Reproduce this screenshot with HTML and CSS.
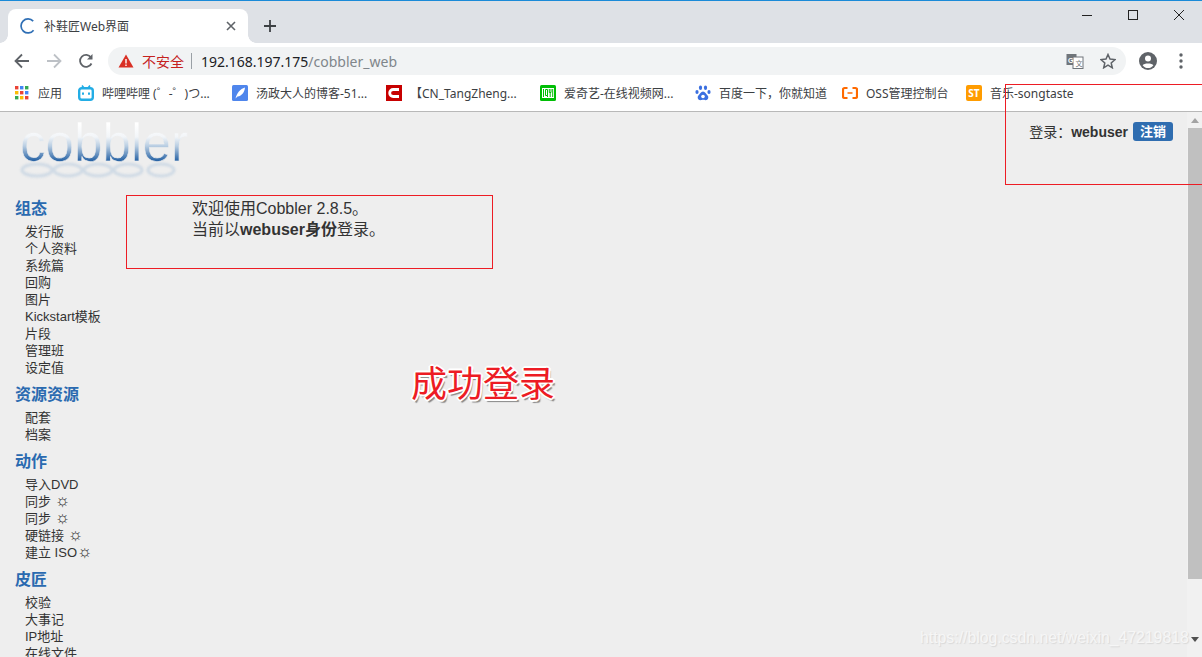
FILE: index.html
```html
<!DOCTYPE html>
<html lang="zh-CN">
<head>
    <meta charset="UTF-8">
    <meta name="viewport" content="width=device-width, initial-scale=1.0">
    <title>补鞋匠Web界面</title>
    <link rel="stylesheet" href="styles.css">
</head>
<body>
    <div class="window">
        <div class="tabstrip">
            <div class="tab">
                <svg class="tab-icon" width="16" height="16" viewBox="0 0 16 16"><path d="M13.2 3.2A7 7 0 1 0 13.6 12.2" fill="none" stroke="#2f6fb5" stroke-width="1.7"/></svg>
                <span class="tab-title">补鞋匠Web界面</span>
                <svg class="tab-close" width="10" height="10" viewBox="0 0 10 10"><path d="M1 1L9 9M9 1L1 9" stroke="#5f6368" stroke-width="1.6"/></svg>
            </div>
            <svg class="new-tab" width="14" height="14" viewBox="0 0 14 14"><path d="M7 1V13M1 7H13" stroke="#3c4043" stroke-width="1.8"/></svg>
            <div class="win-controls">
                <svg width="12" height="12" viewBox="0 0 12 12"><path d="M1 6.5H11" stroke="#222" stroke-width="1"/></svg>
                <svg width="12" height="12" viewBox="0 0 12 12"><rect x="1.5" y="1.5" width="9" height="9" fill="none" stroke="#222" stroke-width="1"/></svg>
                <svg width="12" height="12" viewBox="0 0 12 12"><path d="M1 1L11 11M11 1L1 11" stroke="#222" stroke-width="1"/></svg>
            </div>
        </div>

        <div class="toolbar">
            <svg class="nav-btn" width="16" height="16" viewBox="0 0 16 16"><path d="M15 8H2M8 1.5L1.5 8L8 14.5" fill="none" stroke="#5f6368" stroke-width="1.8"/></svg>
            <svg class="nav-btn" width="16" height="16" viewBox="0 0 16 16"><path d="M1 8H14M8 1.5L14.5 8L8 14.5" fill="none" stroke="#bdc1c6" stroke-width="1.8"/></svg>
            <svg class="nav-btn" width="16" height="16" viewBox="0 0 16 16"><path d="M13.5 10.5A6 6 0 1 1 13 4.5" fill="none" stroke="#5f6368" stroke-width="1.8"/><path d="M14.5 1V6.5H9" fill="#5f6368"/></svg>
            <div class="omnibox">
                <svg width="16" height="14" viewBox="0 0 16 14"><path d="M8 0.5L15.5 13.5H0.5Z" fill="#d93025"/><path d="M8 5V9.5M8 10.5V12" stroke="#fff" stroke-width="1.4"/></svg>
                <span class="insecure">不安全</span>
                <span class="omni-sep"></span>
                <span class="url">192.168.197.175<span class="url-path">/cobbler_web</span></span>
                <span class="omni-right">
                    <svg width="18" height="16" viewBox="0 0 18 16"><rect x="0.5" y="1" width="10" height="11" fill="#70757a"/><rect x="7" y="4" width="10" height="11.5" fill="#fff" stroke="#70757a"/><text x="2" y="10" class="trans-g">G</text><text x="9.5" y="13" class="trans-a">文</text></svg>
                    <svg width="16" height="16" viewBox="0 0 16 16"><path d="M8 1.5L10 6.1L15 6.6L11.2 9.9L12.3 14.8L8 12.2L3.7 14.8L4.8 9.9L1 6.6L6 6.1Z" fill="none" stroke="#5f6368" stroke-width="1.5"/></svg>
                </span>
            </div>
            <svg class="avatar" width="18" height="18" viewBox="0 0 18 18"><circle cx="9" cy="9" r="9" fill="#5f6368"/><circle cx="9" cy="6.6" r="3" fill="#fff"/><path d="M3.6 13.2C5 10.9 13 10.9 14.4 13.2C13 15.2 11 16 9 16C7 16 5 15.2 3.6 13.2Z" fill="#fff"/></svg>
            <svg class="menu-dots" width="4" height="16" viewBox="0 0 4 16"><circle cx="2" cy="2" r="1.7" fill="#5f6368"/><circle cx="2" cy="8" r="1.7" fill="#5f6368"/><circle cx="2" cy="14" r="1.7" fill="#5f6368"/></svg>
        </div>

        <div class="bookmarks">
            <div class="bm bm-apps">
                <svg width="14" height="14" viewBox="0 0 14 14">
                    <rect x="0" y="0" width="3.4" height="3.4" fill="#ea4335"/><rect x="5" y="0" width="3.4" height="3.4" fill="#4285f4"/><rect x="10" y="0" width="3.4" height="3.4" fill="#34a853"/>
                    <rect x="0" y="5" width="3.4" height="3.4" fill="#fbbc05"/><rect x="5" y="5" width="3.4" height="3.4" fill="#ea4335"/><rect x="10" y="5" width="3.4" height="3.4" fill="#4285f4"/>
                    <rect x="0" y="10" width="3.4" height="3.4" fill="#34a853"/><rect x="5" y="10" width="3.4" height="3.4" fill="#fbbc05"/><rect x="10" y="10" width="3.4" height="3.4" fill="#ea4335"/>
                </svg>
                <span>应用</span>
            </div>
            <div class="bm bm-bili">
                <svg width="16" height="16" viewBox="0 0 16 16"><path d="M4 0.5L6 3M12 0.5L10 3" stroke="#23ade5" stroke-width="1.6"/><rect x="1.2" y="3.2" width="13.6" height="11.6" rx="2.5" fill="none" stroke="#23ade5" stroke-width="2.4"/><path d="M5 7.5V9.8M11 7.5V9.8" stroke="#23ade5" stroke-width="2"/></svg>
                <span>哔哩哔哩 (゜-゜)つ...</span>
            </div>
            <div class="bm bm-blog">
                <svg width="16" height="16" viewBox="0 0 16 16"><rect width="16" height="16" rx="1.5" fill="#4f86ec"/><path d="M3.5 13.5C5 8 8 4 13 2.5C12.5 7 10 11 5.5 11.5" fill="#fff"/></svg>
                <span>汤政大人的博客-51...</span>
            </div>
            <div class="bm bm-tang">
                <svg width="16" height="16" viewBox="0 0 16 16"><rect width="16" height="16" fill="#c70000"/><path d="M13 4.5H7.2A3.5 3.5 0 0 0 7.2 11.5H13" fill="none" stroke="#fff" stroke-width="2.8"/></svg>
                <span>【CN_TangZheng...</span>
            </div>
            <div class="bm bm-iqiyi">
                <svg width="16" height="16" viewBox="0 0 16 16"><rect width="16" height="16" rx="1.5" fill="#00be06"/><rect x="2" y="3" width="12" height="10" fill="#fff"/><path d="M3.5 4V12M5.5 4.5H7.5V10.5H5.5ZM7.5 10.5V12M9.3 4V7.5H11V4M10.2 7.5V12M12.7 4V12" fill="none" stroke="#00be06" stroke-width="1"/></svg>
                <span>爱奇艺-在线视频网...</span>
            </div>
            <div class="bm bm-baidu">
                <svg width="16" height="16" viewBox="0 0 16 16"><g fill="#3a6fe0"><ellipse cx="5.5" cy="2.8" rx="1.6" ry="2.2"/><ellipse cx="10.5" cy="2.8" rx="1.6" ry="2.2"/><ellipse cx="2" cy="7" rx="1.6" ry="2"/><ellipse cx="14" cy="7" rx="1.6" ry="2"/><path d="M8 6.5C5.8 6.5 5 9 3.4 10.5C2 12 2.8 15.2 5.4 15.2C6.5 15.2 7 14.8 8 14.8C9 14.8 9.5 15.2 10.6 15.2C13.2 15.2 14 12 12.6 10.5C11 9 10.2 6.5 8 6.5Z"/></g><circle cx="8" cy="11.5" r="1.8" fill="#fff"/></svg>
                <span>百度一下<span class="punct">，</span>你就知道</span>
            </div>
            <div class="bm bm-oss">
                <svg width="16" height="16" viewBox="0 0 16 16"><path d="M5.5 3H2.5A1.5 1.5 0 0 0 1 4.5V11.5A1.5 1.5 0 0 0 2.5 13H5.5M10.5 3H13.5A1.5 1.5 0 0 1 15 4.5V11.5A1.5 1.5 0 0 1 13.5 13H10.5" fill="none" stroke="#ff6a00" stroke-width="2.2"/><path d="M5.5 8H10.5" stroke="#ff6a00" stroke-width="1.5"/></svg>
                <span>OSS管理控制台</span>
            </div>
            <div class="bm">
                <span class="st-icon">ST</span>
                <span>音乐-songtaste</span>
            </div>
        </div>

        <div class="page">
            <div class="page-main">
                <div class="page-head">
                    <svg class="logo" width="174" height="78" viewBox="0 -8 174 78" role="img">
                        <defs>
                            <linearGradient id="logo-grad" gradientUnits="userSpaceOnUse" x1="0" y1="4" x2="0" y2="41">
                                <stop offset="0" stop-color="#ffffff"/>
                                <stop offset="0.35" stop-color="#f2f5f8"/>
                                <stop offset="0.6" stop-color="#b8cde2"/>
                                <stop offset="1" stop-color="#2561a4"/>
                            </linearGradient>
                        </defs>
                        <g class="logo-reflect">
                            <ellipse cx="19" cy="50" rx="15" ry="6"/>
                            <ellipse cx="50" cy="50" rx="14" ry="6"/>
                            <ellipse cx="80" cy="50" rx="14" ry="6"/>
                            <ellipse cx="110" cy="50" rx="14" ry="6"/>
                            <ellipse cx="143" cy="50" rx="13" ry="6"/>
                        </g>
                        <text class="logo-text" x="2" y="41" textLength="168" lengthAdjust="spacingAndGlyphs" fill="url(#logo-grad)">cobbler</text>
                    </svg>
                    <div class="login">
                        <span>登录<span class="punct">：</span><b>webuser</b></span>
                        <a class="logout">注销</a>
                    </div>
                </div>
                <div class="page-body">
                    <div class="sidebar">
                        <h4>组态</h4>
                        <ul>
                            <li>发行版</li>
                            <li>个人资料</li>
                            <li>系统篇</li>
                            <li>回购</li>
                            <li>图片</li>
                            <li>Kickstart模板</li>
                            <li>片段</li>
                            <li>管理班</li>
                            <li>设定值</li>
                        </ul>
                        <h4>资源资源</h4>
                        <ul>
                            <li>配套</li>
                            <li>档案</li>
                        </ul>
                        <h4>动作</h4>
                        <ul>
                            <li>导入DVD</li>
                            <li>同步 <span class="sun">☼</span></li>
                            <li>同步 <span class="sun">☼</span></li>
                            <li>硬链接 <span class="sun">☼</span></li>
                            <li>建立 ISO<span class="sun">☼</span></li>
                        </ul>
                        <h4>皮匠</h4>
                        <ul>
                            <li>校验</li>
                            <li>大事记</li>
                            <li>IP地址</li>
                            <li>在线文件</li>
                        </ul>
                    </div>
                    <div class="content">
                        <p>欢迎使用Cobbler 2.8.5。</p>
                        <p>当前以<b>webuser身份</b>登录。</p>
                    </div>
                </div>
            </div>
            <div class="scrollbar">
                <span class="arrow-up"></span>
                <div class="thumb"></div>
                <span class="arrow-down"></span>
            </div>
        </div>

        <!-- annotations drawn on top of the screenshot -->
        <div class="mark mark-login"></div>
        <div class="mark mark-welcome"></div>
        <div class="note">成功登录</div>
        <div class="watermark">https://blog.csdn.net/weixin_47219818</div>
    </div>
</body>
</html>
```

FILE: styles.css
```css
html, body {
    margin: 0;
    padding: 0;
    height: 657px;
    overflow: hidden;
}
body {
    font-family: "Liberation Sans", "Noto Sans CJK SC", sans-serif;
    color: #333;
    background: #eee;
}
.window {
    position: relative;
    display: flex;
    flex-direction: column;
    height: 657px;
    overflow: hidden;
}
.punct {
    font-family: "Noto Sans CJK TC", sans-serif;
}

/* tab strip */
.tabstrip {
    display: flex;
    align-items: flex-end;
    box-sizing: border-box;
    height: 43px;
    padding-left: 8px;
    background: #dee1e6;
    border-top: 1px solid #1a8ad8;
}
.tab {
    position: relative;
    display: flex;
    align-items: center;
    box-sizing: border-box;
    width: 240px;
    height: 34px;
    padding: 0 12px;
    background: #fff;
    border-radius: 8px 8px 0 0;
}
.tab::before, .tab::after {
    content: "";
    position: absolute;
    bottom: 0;
    width: 8px;
    height: 8px;
}
.tab::before {
    left: -8px;
    background: radial-gradient(circle at 0 0, #dee1e6 7.5px, #fff 8px);
}
.tab::after {
    right: -8px;
    background: radial-gradient(circle at 100% 0, #dee1e6 7.5px, #fff 8px);
}
.tab-title {
    flex: 1;
    margin-left: 8px;
    font-family: "Noto Sans", "Noto Sans CJK SC", sans-serif;
    font-size: 12px;
    color: #3c4043;
}
.new-tab {
    margin: 0 0 10px 15px;
}
.win-controls {
    display: flex;
    gap: 34px;
    margin: 8px 17px 22px auto;
    align-self: flex-start;
}

/* toolbar */
.toolbar {
    display: flex;
    align-items: center;
    height: 32px;
    padding-top: 4px;
    box-sizing: border-box;
    background: #fff;
}
.nav-btn {
    margin-left: 16px;
    flex: none;
}
.nav-btn:first-child {
    margin-left: 14px;
}
.omnibox {
    display: flex;
    align-items: center;
    flex: none;
    box-sizing: border-box;
    width: 1018px;
    height: 28px;
    margin-left: 14px;
    padding: 0 10px;
    background: #f1f3f4;
    border-radius: 14px;
}
.insecure {
    margin-left: 8px;
    font-size: 14px;
    color: #c5221f;
}
.omni-sep {
    width: 1px;
    height: 16px;
    margin: 0 9px 0 7px;
    background: #9aa0a6;
}
.url {
    font-family: "Noto Sans", sans-serif;
    font-size: 14px;
    color: #202124;
}
.url-path {
    color: #80868b;
}
.omni-right {
    display: flex;
    align-items: center;
    gap: 16px;
    margin-left: auto;
}
.trans-g {
    font-size: 7px;
    font-weight: bold;
    fill: #fff;
}
.trans-a {
    font-size: 7px;
    fill: #70757a;
}
.avatar {
    flex: none;
    margin-left: 13px;
}
.menu-dots {
    flex: none;
    margin-left: 22px;
}

/* bookmarks bar */
.bookmarks {
    display: flex;
    align-items: center;
    box-sizing: border-box;
    height: 37px;
    padding: 0 0 1px 15px;
    background: #fff;
    border-bottom: 1px solid #b8b8b8;
    font-family: "Noto Sans", "Noto Sans CJK SC", sans-serif;
    font-size: 12px;
    color: #3c4043;
    white-space: nowrap;
}
.bm {
    display: flex;
    align-items: center;
    gap: 8px;
    flex: none;
}
.bm svg {
    flex: none;
}
.bm-apps { width: 63px; gap: 9px; }
.bm-bili { width: 154px; }
.bm-blog { width: 154px; }
.bm-tang { width: 154px; }
.bm-iqiyi { width: 155px; }
.bm-baidu { width: 147px; }
.bm-oss { width: 124px; }
.st-icon {
    width: 16px;
    height: 16px;
    border-radius: 2px;
    background: #ff9c00;
    color: #fff;
    font-size: 10px;
    font-weight: bold;
    line-height: 16px;
    text-align: center;
}

/* page */
.page {
    flex: 1;
    display: flex;
    min-height: 0;
}
.page-main {
    flex: 1;
    min-width: 0;
    overflow: hidden;
}
.page-head {
    display: flex;
    justify-content: space-between;
    height: 86px;
}
.logo {
    margin: 0 0 0 18px;
}
.logo-text {
    font-family: "Liberation Sans", sans-serif;
    font-size: 54px;
    stroke: #eee;
    stroke-width: 0.6;
}
.logo-reflect {
    fill: none;
    stroke: #cfdae5;
    stroke-width: 3;
    filter: blur(1px);
}
.login {
    display: flex;
    align-items: flex-start;
    gap: 5px;
    margin: 10px 14px 0 0;
    font-size: 14px;
    line-height: 19px;
}
.logout {
    padding: 0 7px;
    background: #2f6db0;
    border-radius: 3px;
    color: #fff;
    font-size: 13px;
    font-weight: bold;
}
.page-body {
    display: flex;
}
.sidebar {
    flex: none;
    width: 192px;
    padding-left: 15px;
    box-sizing: border-box;
}
.sidebar h4 {
    margin: 0;
    font-size: 16px;
    line-height: 21px;
    color: #2a6ab0;
}
.sidebar ul {
    margin: 3.5px 0 8.5px;
    padding: 0 0 0 10px;
    list-style: none;
}
.sidebar li {
    font-size: 13px;
    line-height: 17px;
    white-space: nowrap;
}
.sun {
    font-size: 17px;
    line-height: 0;
}
.content {
    font-size: 16px;
    line-height: 21px;
}
.content p {
    margin: 0;
}

/* scrollbar */
.scrollbar {
    flex: none;
    position: relative;
    display: flex;
    flex-direction: column;
    align-items: center;
    width: 15px;
    background: #f1f1f1;
}
.thumb {
    width: 14px;
    height: 451px;
    margin-top: 5px;
    background: #c0c0c0;
}
.arrow-up {
    margin-top: 6px;
    border: 4px solid transparent;
    border-top: 0;
    border-bottom: 5px solid #a3a3a3;
}
.arrow-down {
    margin-top: 58px;
    border: 4px solid transparent;
    border-bottom: 0;
    border-top: 5px solid #505050;
}

/* red boxes and captions on top */
.mark {
    position: absolute;
    box-sizing: border-box;
    border: 1px solid #ed1c24;
}
.mark-login {
    left: 1005px;
    top: 84px;
    width: 210px;
    height: 101px;
}
.mark-welcome {
    left: 126px;
    top: 195px;
    width: 367px;
    height: 74px;
}
.note {
    position: absolute;
    left: 411px;
    top: 362px;
    font-size: 36px;
    line-height: 46px;
    color: #ed1c24;
    white-space: nowrap;
    text-shadow: -1px -1px 0 #fff, 1px -1px 0 #fff, -1px 1px 0 #fff, 1px 1px 0 #fff, 2px 0 0 #fff, -2px 0 0 #fff, 0 -2px 0 #fff, 0 2px 0 #fff, 2px 3px 1px #888;
}
.watermark {
    position: absolute;
    left: 920px;
    top: 628px;
    font-size: 15.8px;
    line-height: 19px;
    color: #f6f6f6;
    white-space: nowrap;
    text-shadow: 1px 1px 1px #d8d8d8;
}
```
